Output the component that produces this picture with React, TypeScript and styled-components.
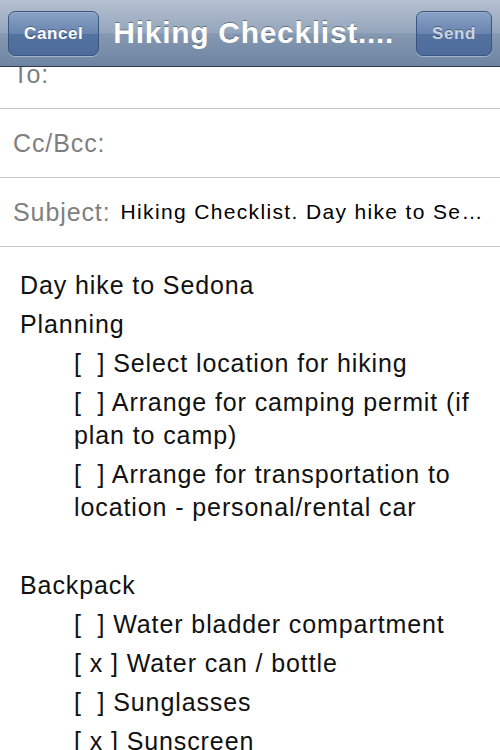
import React from 'react'
import styled, { createGlobalStyle } from 'styled-components'

const GlobalStyle = createGlobalStyle`
    html, body {
        margin: 0;
        padding: 0;
        background: #ffffff;
    }
    body {
        font-family: "Liberation Sans", Arial, Helvetica, sans-serif;
    }
`

const SScreen = styled.div`
    width: 500px;
    height: 750px;
    overflow: hidden;
    background: #ffffff;
    display: flex;
    flex-direction: column;
`

const SNavBar = styled.div`
    position: relative;
    z-index: 2;
    flex: none;
    height: 67px;
    border-bottom: 1px solid #2f3a4a;
    background: linear-gradient(to bottom, #b5c0d0 0%, #94a6bc 50%, #8699b2 51%, #6d84a2 100%);
    display: flex;
    flex-direction: row;
    align-items: center;
    padding: 0 8px;
    box-sizing: border-box;
    gap: 14px;
`

const SBarButton = styled.button<{ $disabled?: boolean }>`
    flex: none;
    height: 45px;
    padding: 0 15px;
    margin-top: 1px;
    border: 1px solid #3a5680;
    border-radius: 7px;
    background: linear-gradient(to bottom, #8aa2c5 0%, #6985b0 50%, #54729f 51%, #4d6c9b 100%);
    box-shadow: 0 1px 0 rgba(255, 255, 255, 0.35), inset 0 1px 0 rgba(255, 255, 255, 0.15);
    color: ${p => (p.$disabled ? '#c9d4e1' : '#ffffff')};
    font-family: "Liberation Sans", Arial, sans-serif;
    font-weight: 700;
    font-size: 17px;
    letter-spacing: 0.6px;
    text-shadow: 0 -1px 0 rgba(0, 0, 0, 0.35);
    cursor: pointer;
`

const STitle = styled.div`
    flex: 1;
    min-width: 0;
    color: #ffffff;
    font-weight: 700;
    font-size: 30px;
    letter-spacing: 0.7px;
    white-space: nowrap;
    overflow: hidden;
    text-shadow: 0 -1px 0 rgba(0, 0, 0, 0.35);
    margin-top: -1px;
`

const SScroller = styled.div`
    flex: 1;
    overflow: hidden;
`

const SContent = styled.div`
    margin-top: -27px;
`

const SField = styled.div`
    height: 68px;
    border-bottom: 1px solid #c6c6c6;
    display: flex;
    flex-direction: row;
    align-items: center;
    padding: 0 13px;
    gap: 10px;
`

const SLabel = styled.span`
    flex: none;
    color: #7f7f7f;
    font-size: 25px;
    letter-spacing: 0.9px;
`

const SValue = styled.span`
    flex: 1;
    min-width: 0;
    color: #000000;
    font-size: 21px;
    letter-spacing: 1.35px;
    white-space: nowrap;
    overflow: hidden;
    text-overflow: ellipsis;
`

const SBody = styled.div`
    padding: 22px 20px 0 20px;
    color: #111111;
    font-size: 25px;
    letter-spacing: 0.9px;
    line-height: 33px;
    display: flex;
    flex-direction: column;
    gap: 6px;
`

const SLine = styled.div<{ $indent?: boolean }>`
    padding-left: ${p => (p.$indent ? '54px' : '0')};
    min-height: 33px;
    white-space: pre-wrap;
`

const lines: { text: string; indent?: boolean }[] = [
    { text: 'Day hike to Sedona' },
    { text: 'Planning' },
    { text: '[  ] Select location for hiking', indent: true },
    { text: '[  ] Arrange for camping permit (if plan to camp)', indent: true },
    { text: '[  ] Arrange for transportation to location - personal/rental car', indent: true },
    { text: '' },
    { text: 'Backpack' },
    { text: '[  ] Water bladder compartment', indent: true },
    { text: '[ x ] Water can / bottle', indent: true },
    { text: '[  ] Sunglasses', indent: true },
    { text: '[ x ] Sunscreen', indent: true },
    { text: '[  ] First aid kit', indent: true },
]

export default function App() {
    return (
        <>
            <GlobalStyle />
            <SScreen>
                <SNavBar>
                    <SBarButton>Cancel</SBarButton>
                    <STitle>Hiking Checklist....</STitle>
                    <SBarButton $disabled>Send</SBarButton>
                </SNavBar>
                <SScroller>
                    <SContent>
                        <SField>
                            <SLabel>To:</SLabel>
                        </SField>
                        <SField>
                            <SLabel>Cc/Bcc:</SLabel>
                        </SField>
                        <SField>
                            <SLabel>Subject:</SLabel>
                            <SValue>Hiking Checklist. Day hike to Sedona</SValue>
                        </SField>
                        <SBody>
                            {lines.map((l, i) => (
                                <SLine key={i} $indent={l.indent}>{l.text}</SLine>
                            ))}
                        </SBody>
                    </SContent>
                </SScroller>
            </SScreen>
        </>
    )
}
